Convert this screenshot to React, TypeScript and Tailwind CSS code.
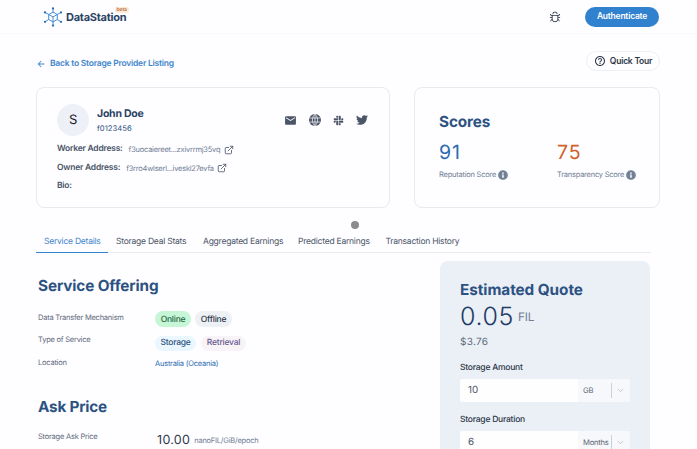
import React from "react";
import { MdArrowBack, MdEmail } from "react-icons/md";
import { AiOutlineBug } from "react-icons/ai";
import { FaInfoCircle, FaSlack, FaTwitter } from "react-icons/fa";
import { FiChevronDown, FiExternalLink } from "react-icons/fi";
import { BiHelpCircle } from "react-icons/bi";

function Logo() {
  const nodes = [
    [10, 1.4], [18, 5.4], [18, 14.8], [10, 18.6], [2, 14.8], [2, 5.4],
  ];
  return (
    <svg viewBox="0 0 20 20" className="h-5 w-5 shrink-0" fill="none" stroke="#3182ce" strokeWidth="0.9">
      <path d="M10 5.2 14.3 7.5v5L10 14.9l-4.3-2.4v-5zM5.7 7.5 10 9.9l4.3-2.4M10 9.9v5M10 5.2V1.6M14.3 7.5 18 5.4M14.3 12.5l3.7 2.3M10 14.9v3.5M5.7 12.5 2 14.8M5.7 7.5 2 5.4" />
      {nodes.map(([x, y]) => (
        <circle key={`${x}-${y}`} cx={x} cy={y} r="1.15" fill="#2b6cb0" stroke="none" />
      ))}
    </svg>
  );
}

function Globe() {
  return (
    <svg viewBox="0 0 24 24" className="h-[12px] w-[12px]">
      <circle cx="12" cy="12" r="12" fill="#4a5568" />
      <path d="M12 0v24M1 8h22M1 16h22M12 .5c-7 6-7 17 0 23M12 .5c7 6 7 17 0 23" fill="none" stroke="#fefdff" strokeWidth="1.4" />
    </svg>
  );
}

function Address({ label, value }: { label: string; value: string }) {
  return (
    <div className="flex h-[18.5px] items-center">
      <span className="text-[8.5px] font-semibold text-[#4a5568]">{label}</span>
      <span className="ml-[6px] text-[7.5px] text-[#718096]">{value}</span>
      <FiExternalLink className="ml-[3.5px] h-[10px] w-[10px] text-[#4a5568]" />
    </div>
  );
}

function Score({ value, label, color }: { value: string; label: string; color: string }) {
  return (
    <div>
      <div className={`h-[26px] text-[19.5px] leading-[26px] tracking-[1px] ${color}`}>{value}</div>
      <div className="mt-[4px] flex h-[11px] items-center gap-[2px] text-[7.5px] text-[#718096]">
        {label}
        <FaInfoCircle className="h-[10px] w-[10px]" />
      </div>
    </div>
  );
}

function Field({ label, value, unit }: { label: string; value: string; unit: string }) {
  return (
    <div className="h-[52px]">
      <div className="h-[10px] text-[8.5px] leading-[11px] font-medium text-[#2d3748]">{label}</div>
      <div className="mt-[6px] flex h-[23px] rounded-[2px] bg-[#fefeff]">
        <div className="flex w-[118px] items-center pt-[2px] pl-[8px] text-[9.8px] tracking-[-0.1px] text-[#4a5568]">{value}</div>
        <div className="flex flex-1 items-center bg-[#f7f8fb] pl-[5px] text-[7.6px] text-[#5b6472]">
          <span className="w-[28px]">{unit}</span>
          <span className="h-[15px] w-px bg-[#cccfd4]" />
          <FiChevronDown className="ml-[4px] h-[9px] w-[9px] text-[#b5b9bf]" />
        </div>
      </div>
    </div>
  );
}

const tabs = [
  { name: "Aggregated Earnings", width: "w-[95px]" },
  { name: "Predicted Earnings", width: "w-[87.5px]" },
  { name: "Transaction History", width: "w-[90px]" },
];

export default function App() {
  return (
    <div className="relative h-[449px] w-[697px] overflow-hidden bg-[#fefdff] font-['Inter',sans-serif] tracking-[-0.23px] whitespace-nowrap [text-rendering:geometricPrecision]">
      <header className="flex h-[34px] items-center border-b border-[#faf9fc] pr-[38px] pl-[43px]">
        <Logo />
        <div className="relative ml-[3px] pt-[2px] text-[11px] font-bold tracking-[-0.25px] text-[#2a4365]">
          DataStation
          <span className="absolute top-0 left-[48.5px] h-[6px] rounded-[2px] bg-[#feebd5] px-[2px] text-[5px] leading-[6px] font-semibold tracking-[-0.1px] text-[#b56a45]">beta</span>
        </div>
        <AiOutlineBug className="ml-auto h-[12px] w-[12px] text-[#2d3748]" />
        <button className="ml-[24px] h-[20px] w-[74px] rounded-full bg-[#3182ce] text-[8.5px] font-semibold text-white">Authenticate</button>
      </header>

      <div className="flex h-[53px] items-start justify-between pr-[37px] pl-[36px]">
        <a className="mt-[24px] flex h-3 items-center text-[8.5px] font-semibold text-[#3e86cc]">
          <MdArrowBack className="mr-[4px] h-[10px] w-[10px]" />
          Back to Storage Provider Listing
        </a>
        <button className="mt-[17px] flex h-[20px] w-[74px] items-center justify-center gap-1 rounded-full border border-[#edf0f5] text-[8.5px] font-semibold text-[#2d3748]">
          <BiHelpCircle className="h-[12px] w-[12px]" />
          <span className="pt-px">Quick Tour</span>
        </button>
      </div>

      <div className="flex gap-[24px] pl-[36px]">
        <section className="h-[121px] w-[354px] rounded-[8px] border border-[#e8eaf0] pt-[16px] pl-[20px]">
          <div className="flex h-[33px]">
            <div className="flex h-[32px] w-[32px] items-center justify-center rounded-full bg-[#edf1f7] pt-px text-[13px] text-[#1a202c]">S</div>
            <div className="ml-[8px] w-[187px] pt-[2px]">
              <div className="text-[10.5px] leading-[15px] font-bold text-[#2a4365]">John Doe</div>
              <div className="mt-[1px] text-[7.7px] leading-[13px] tracking-normal text-[#2c5282]">f0123456</div>
            </div>
            <div className="mt-[10px] flex h-3 items-center gap-[12px] text-[#4a5568]">
              <MdEmail className="h-[13px] w-[13px]" />
              <Globe />
              <FaSlack className="h-[11px] w-[11px]" />
              <FaTwitter className="h-[12px] w-[12px]" />
            </div>
          </div>
          <div className="mt-[3.5px]">
            <Address label="Worker Address:" value="f3uocaiereet...zxivrrmj35vq" />
            <Address label="Owner Address:" value="f3rro4wlserl...iveskl27evfa" />
            <div className="flex h-[18px] items-center text-[8.5px] font-semibold text-[#4a5568]">Bio:</div>
          </div>
        </section>
        <section className="h-[121px] w-[246px] rounded-[8px] border border-[#e8eaf0] pt-[24px] pl-[24px]">
          <h2 className="h-[20px] text-[15.3px] leading-[20px] font-bold tracking-[-0.12px] text-[#2c5282]">Scores</h2>
          <div className="mt-[7px] grid grid-cols-[118px_1fr]">
            <Score value="91" label="Reputation Score" color="text-[#2b6cb0]" />
            <Score value="75" label="Transparency Score" color="text-[#d2622a]" />
          </div>
        </section>
      </div>

      <nav className="mt-[24px] ml-[36px] flex h-[21px] w-[615px] border-b border-[#e8eaf0] text-[8.5px] leading-[21px] text-[#4a5568]">
        <div className="h-[21px] w-[72px] border-b-[1.5px] border-[#3182ce] pl-[8px] text-[#3e86cc]">Service Details</div>
        <div className="ml-[8px] w-[87px]">Storage Deal Stats</div>
        {tabs.map((tab) => <div key={tab.name} className={tab.width}>{tab.name}</div>)}
      </nav>

      <main className="flex pl-[38px]">
        <section className="w-[402px] pt-[23px]">
          <h2 className="h-[20px] text-[15.3px] leading-[20px] font-bold tracking-[-0.12px] text-[#2c5282]">Service Offering</h2>
          <div className="mt-[11px] grid grid-cols-[117px_1fr] text-[7.5px] text-[#606a7c]">
            <div className="h-[24px] leading-[21px]">Data Transfer Mechanism</div>
            <div className="flex h-[24px] items-center gap-[4px] text-[8.5px] font-medium">
              <span className="flex h-[16px] w-[36px] items-center justify-center rounded-full bg-[#c6f6d5] pt-[2px] text-[#276749]">Online</span>
              <span className="flex h-[16px] w-[37px] items-center justify-center rounded-full bg-[#edf0f5] pt-[2px] text-[#2d3748]">Offline</span>
            </div>
            <div className="h-[24px] leading-[18px]">Type of Service</div>
            <div className="flex h-[24px] items-center gap-[5px] text-[8.5px] font-medium">
              <span className="flex h-[15px] w-[41px] items-center justify-center rounded-full bg-[#ebf7fe] pt-px text-[#2c5282]">Storage</span>
              <span className="flex h-[15px] w-[45px] items-center justify-center rounded-full bg-[#f8f3f7] pt-px text-[#695b91]">Retrieval</span>
            </div>
            <div className="h-[18px] leading-[15px]">Location</div>
            <div className="h-[18px] leading-[18px] text-[#2b6cb0]">Australia (Oceania)</div>
          </div>
          <h2 className="mt-[24px] h-[20px] text-[15.3px] leading-[20px] font-bold tracking-[-0.2px] text-[#2c5282]">Ask Price</h2>
          <div className="mt-[12px] grid grid-cols-[119px_1fr] text-[7.5px] text-[#606a7c]">
            <div className="leading-[15px]">Storage Ask Price</div>
            <div className="flex h-[24px] items-center gap-[4px]">
              <span className="text-[12.5px] tracking-[0.3px] text-[#2d3748]">10.00</span>
              <span className="text-[#718096]">nanoFIL/GiB/epoch</span>
            </div>
          </div>
        </section>
        <aside className="mt-[8px] h-[200px] w-[210px] rounded-t-[8px] bg-[#ebeff6] px-[20px] pt-[19px]">
          <h2 className="h-[20px] text-[15.3px] leading-[20px] font-bold tracking-[-0.05px] text-[#2c5282]">Estimated Quote</h2>
          <div className="mt-[3px] flex h-[29px] items-center">
            <span className="text-[25px] leading-[29px] font-light tracking-[0.6px] text-[#1f3c66]">0.05</span>
            <span className="ml-[4px] text-[11.8px] tracking-[-0.1px] text-[#718096]">FIL</span>
          </div>
          <div className="mt-[3px] h-[15px] text-[10px] leading-[15px] tracking-[0.3px] text-[#606a7c]">$3.76</div>
          <div className="mt-[13px]">
            <Field label="Storage Amount" value="10" unit="GB" />
            <Field label="Storage Duration" value="6" unit="Months" />
          </div>
        </aside>
      </main>
      <div className="absolute top-[221px] left-[351px] h-[8px] w-[8px] rounded-full bg-[#8c8b90]" />
    </div>
  );
}
